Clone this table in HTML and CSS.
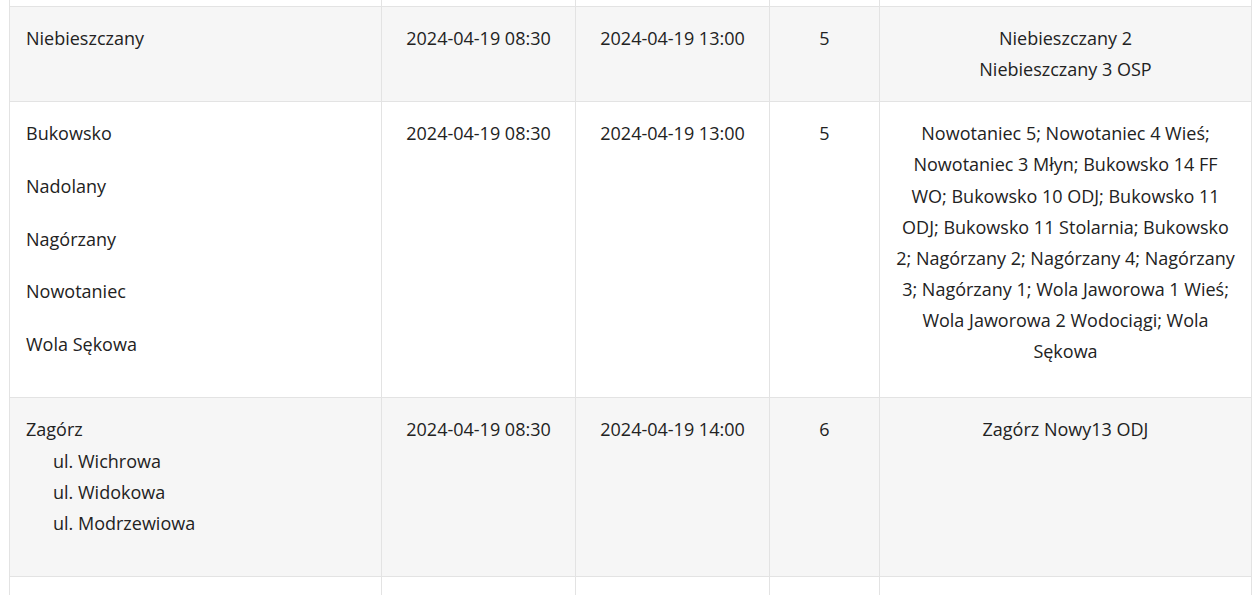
FILE: index.html
```html
<!DOCTYPE html>
<html lang="pl">
<head>
<meta charset="utf-8">
<title>Wyłączenia prądu</title>
<link rel="stylesheet" href="styles.css">
</head>
<body>
<div class="wrap">
<table class="outages">
  <colgroup>
    <col class="c-area">
    <col class="c-from">
    <col class="c-to">
    <col class="c-num">
    <col class="c-stations">
  </colgroup>
  <tbody>
    <tr class="stub"><td></td><td></td><td></td><td></td><td></td></tr>
    <tr class="alt">
      <td class="area">Niebieszczany</td>
      <td class="mid">2024-04-19 08:30</td>
      <td class="mid">2024-04-19 13:00</td>
      <td class="mid">5</td>
      <td class="mid">Niebieszczany 2<br>Niebieszczany 3 OSP</td>
    </tr>
    <tr>
      <td class="area">
        <p>Bukowsko</p>
        <p>Nadolany</p>
        <p>Nagórzany</p>
        <p>Nowotaniec</p>
        <p>Wola Sękowa</p>
      </td>
      <td class="mid">2024-04-19 08:30</td>
      <td class="mid">2024-04-19 13:00</td>
      <td class="mid">5</td>
      <td class="mid">Nowotaniec 5; Nowotaniec 4 Wieś; Nowotaniec 3 Młyn; Bukowsko 14 FF WO; Bukowsko 10 ODJ; Bukowsko 11 ODJ; Bukowsko 11 Stolarnia; Bukowsko 2; Nagórzany 2; Nagórzany 4; Nagórzany 3; Nagórzany 1; Wola Jaworowa 1 Wieś; Wola Jaworowa 2 Wodociągi; Wola Sękowa</td>
    </tr>
    <tr class="alt">
      <td class="area">Zagórz
        <ul class="streets">
          <li>ul. Wichrowa</li>
          <li>ul. Widokowa</li>
          <li>ul. Modrzewiowa</li>
        </ul>
      </td>
      <td class="mid">2024-04-19 08:30</td>
      <td class="mid">2024-04-19 14:00</td>
      <td class="mid">6</td>
      <td class="mid">Zagórz Nowy13 ODJ</td>
    </tr>
    <tr class="tail"><td></td><td></td><td></td><td></td><td></td></tr>
  </tbody>
</table>
</div>
</body>
</html>
```

FILE: styles.css
```css
html, body {
  margin: 0;
  padding: 0;
  background: #ffffff;
}

.wrap {
  padding-left: 9px;
}

.outages {
  border-collapse: collapse;
  table-layout: fixed;
  width: 1242px;
  font-family: "Open Sans", "Noto Sans", sans-serif;
  font-size: 18px;
  line-height: 1.73;
  color: #222222;
}

.c-area { width: 372px; }
.c-from { width: 194px; }
.c-to { width: 194px; }
.c-num { width: 110px; }
.c-stations { width: 372px; }

.outages td {
  border: 1px solid #e3e3e3;
  padding: 16px;
  vertical-align: top;
}

.outages tr.alt td {
  background: #f6f6f6;
}

.outages tr.stub td {
  border-top: 0;
  padding: 0;
  height: 6px;
}

.outages tr.tail td {
  border-bottom: 0;
  padding: 0;
  height: 40px;
}

.area {
  text-align: left;
}

.mid {
  text-align: center;
}

.area p {
  margin: 0 0 21.5px;
}

.streets {
  list-style: none;
  margin: 0 0 21.5px;
  padding: 0 0 0 27px;
  line-height: 31px;
}
```
